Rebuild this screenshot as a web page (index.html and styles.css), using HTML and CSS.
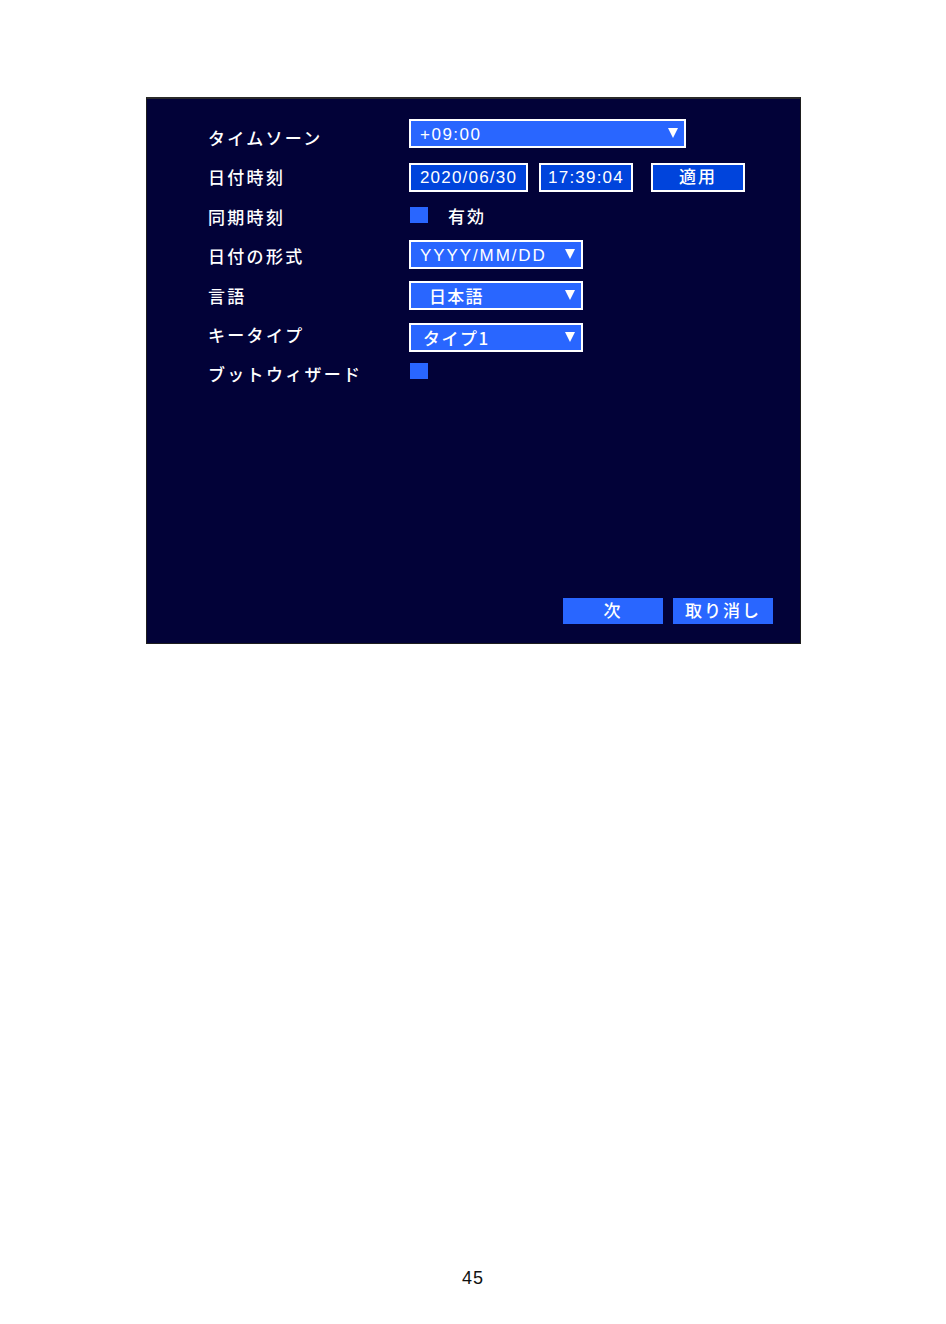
FILE: index.html
```html
<!DOCTYPE html>
<html lang="ja">
<head>
    <meta charset="UTF-8">
    <meta name="viewport" content="width=device-width, initial-scale=1.0">
    <title>一般設定</title>
    <link rel="stylesheet" href="styles.css">
</head>
<body>
    <div class="page">
        <div class="panel">
            <div class="form">
                <div class="labels">
                    <div class="label">タイムソーン</div>
                    <div class="label">日付時刻</div>
                    <div class="label">同期時刻</div>
                    <div class="label">日付の形式</div>
                    <div class="label">言語</div>
                    <div class="label">キータイプ</div>
                    <div class="label">ブットウィザード</div>
                </div>
                <div class="fields">
                    <div class="select select-wide zone"><span>+09:00</span><i class="arrow"></i></div>
                    <div class="field-row datetime">
                        <div class="box box-date">2020/06/30</div>
                        <div class="box box-time">17:39:04</div>
                        <div class="box box-apply">適用</div>
                    </div>
                    <div class="check-row sync"><span class="check"></span><span class="check-text">有効</span></div>
                    <div class="select format"><span>YYYY/MM/DD</span><i class="arrow"></i></div>
                    <div class="select lang"><span class="indent-lang">日本語</span><i class="arrow"></i></div>
                    <div class="select keytype"><span class="indent-key">タイプ1</span><i class="arrow"></i></div>
                    <div class="check-row"><span class="check"></span></div>
                </div>
            </div>
            <div class="actions">
                <button class="btn">次</button>
                <button class="btn">取り消し</button>
            </div>
        </div>
        <div class="page-num">45</div>
    </div>
</body>
</html>
```

FILE: styles.css
```css
body { margin: 0; background: #fff; font-family: "Liberation Sans", "Noto Sans CJK JP", sans-serif; }
.page { padding-top: 97px; height: 1324px; box-sizing: border-box; }
.panel { width: 655px; height: 547px; margin-left: 146px; box-sizing: border-box; background: #020238; border: 1px solid #1e1e1e; border-top: 2px solid #2a2a2a; display: flex; flex-direction: column; }
.form { display: flex; padding-left: 61px; }
.labels { width: 201px; padding-top: 19px; }
.label { height: 39.4px; line-height: 39.4px; color: #fff; font-family: "Noto Sans CJK JP", sans-serif; font-size: 17px; font-weight: 500; letter-spacing: 2.3px; white-space: nowrap; }
.fields { padding-top: 20px; display: flex; flex-direction: column; align-items: flex-start; }

.select { position: relative; width: 174px; height: 29px; box-sizing: border-box; border: 2px solid #fff; background: #2966ff; color: #fff; font-size: 17px; line-height: 25px; letter-spacing: 1.5px; padding: 1px 0 0 9px; white-space: nowrap; }
.select-wide { width: 277px; }
.format { letter-spacing: 1.9px; }
.arrow { position: absolute; right: 6px; top: 7px; width: 0; height: 0; border-left: 5.5px solid transparent; border-right: 5.5px solid transparent; border-top: 10px solid #fff; }
.indent-lang { display: inline-block; padding-left: 9px; margin-top: -1px; font-family: "Noto Sans CJK JP", sans-serif; font-weight: 500; letter-spacing: 1.2px; }
.indent-key { display: inline-block; padding-left: 3px; margin-top: -1px; font-family: "Noto Sans CJK JP", sans-serif; font-weight: 500; letter-spacing: 1.5px; }

.zone { margin-bottom: 15px; }
.datetime { margin-bottom: 15px; }
.sync { margin-bottom: 17px; }
.format { margin-bottom: 12px; }
.lang { margin-bottom: 13px; }
.keytype { margin-bottom: 11px; }

.field-row { display: flex; }
.box { height: 29px; box-sizing: border-box; border: 2px solid #fff; background: #0044dc; color: #fff; font-size: 17px; line-height: 25px; letter-spacing: 1.2px; text-align: center; }
.box-date { width: 119px; margin-right: 11px; }
.box-time { width: 94px; margin-right: 18px; }
.box-apply { width: 94px; font-family: "Noto Sans CJK JP", sans-serif; font-weight: 500; letter-spacing: 2px; line-height: 21px; }

.check-row { display: flex; align-items: center; height: 16px; padding-left: 1px; }
.check { width: 18px; height: 16px; background: #2966ff; }
.check-text { margin-left: 20px; color: #fff; font-family: "Noto Sans CJK JP", sans-serif; font-size: 17px; font-weight: 500; letter-spacing: 2px; }

.actions { margin-top: auto; display: flex; justify-content: flex-end; gap: 10px; padding: 0 27px 19px 0; }
.btn { width: 100px; height: 26px; padding: 0 0 2px; border: none; background: #2966ff; color: #fff; font-family: "Noto Sans CJK JP", sans-serif; font-size: 17px; font-weight: 500; letter-spacing: 2px; line-height: 22px; }

.page-num { margin-top: 624px; text-align: center; font-size: 18px; line-height: 21px; color: #111; letter-spacing: 1px; }
```
